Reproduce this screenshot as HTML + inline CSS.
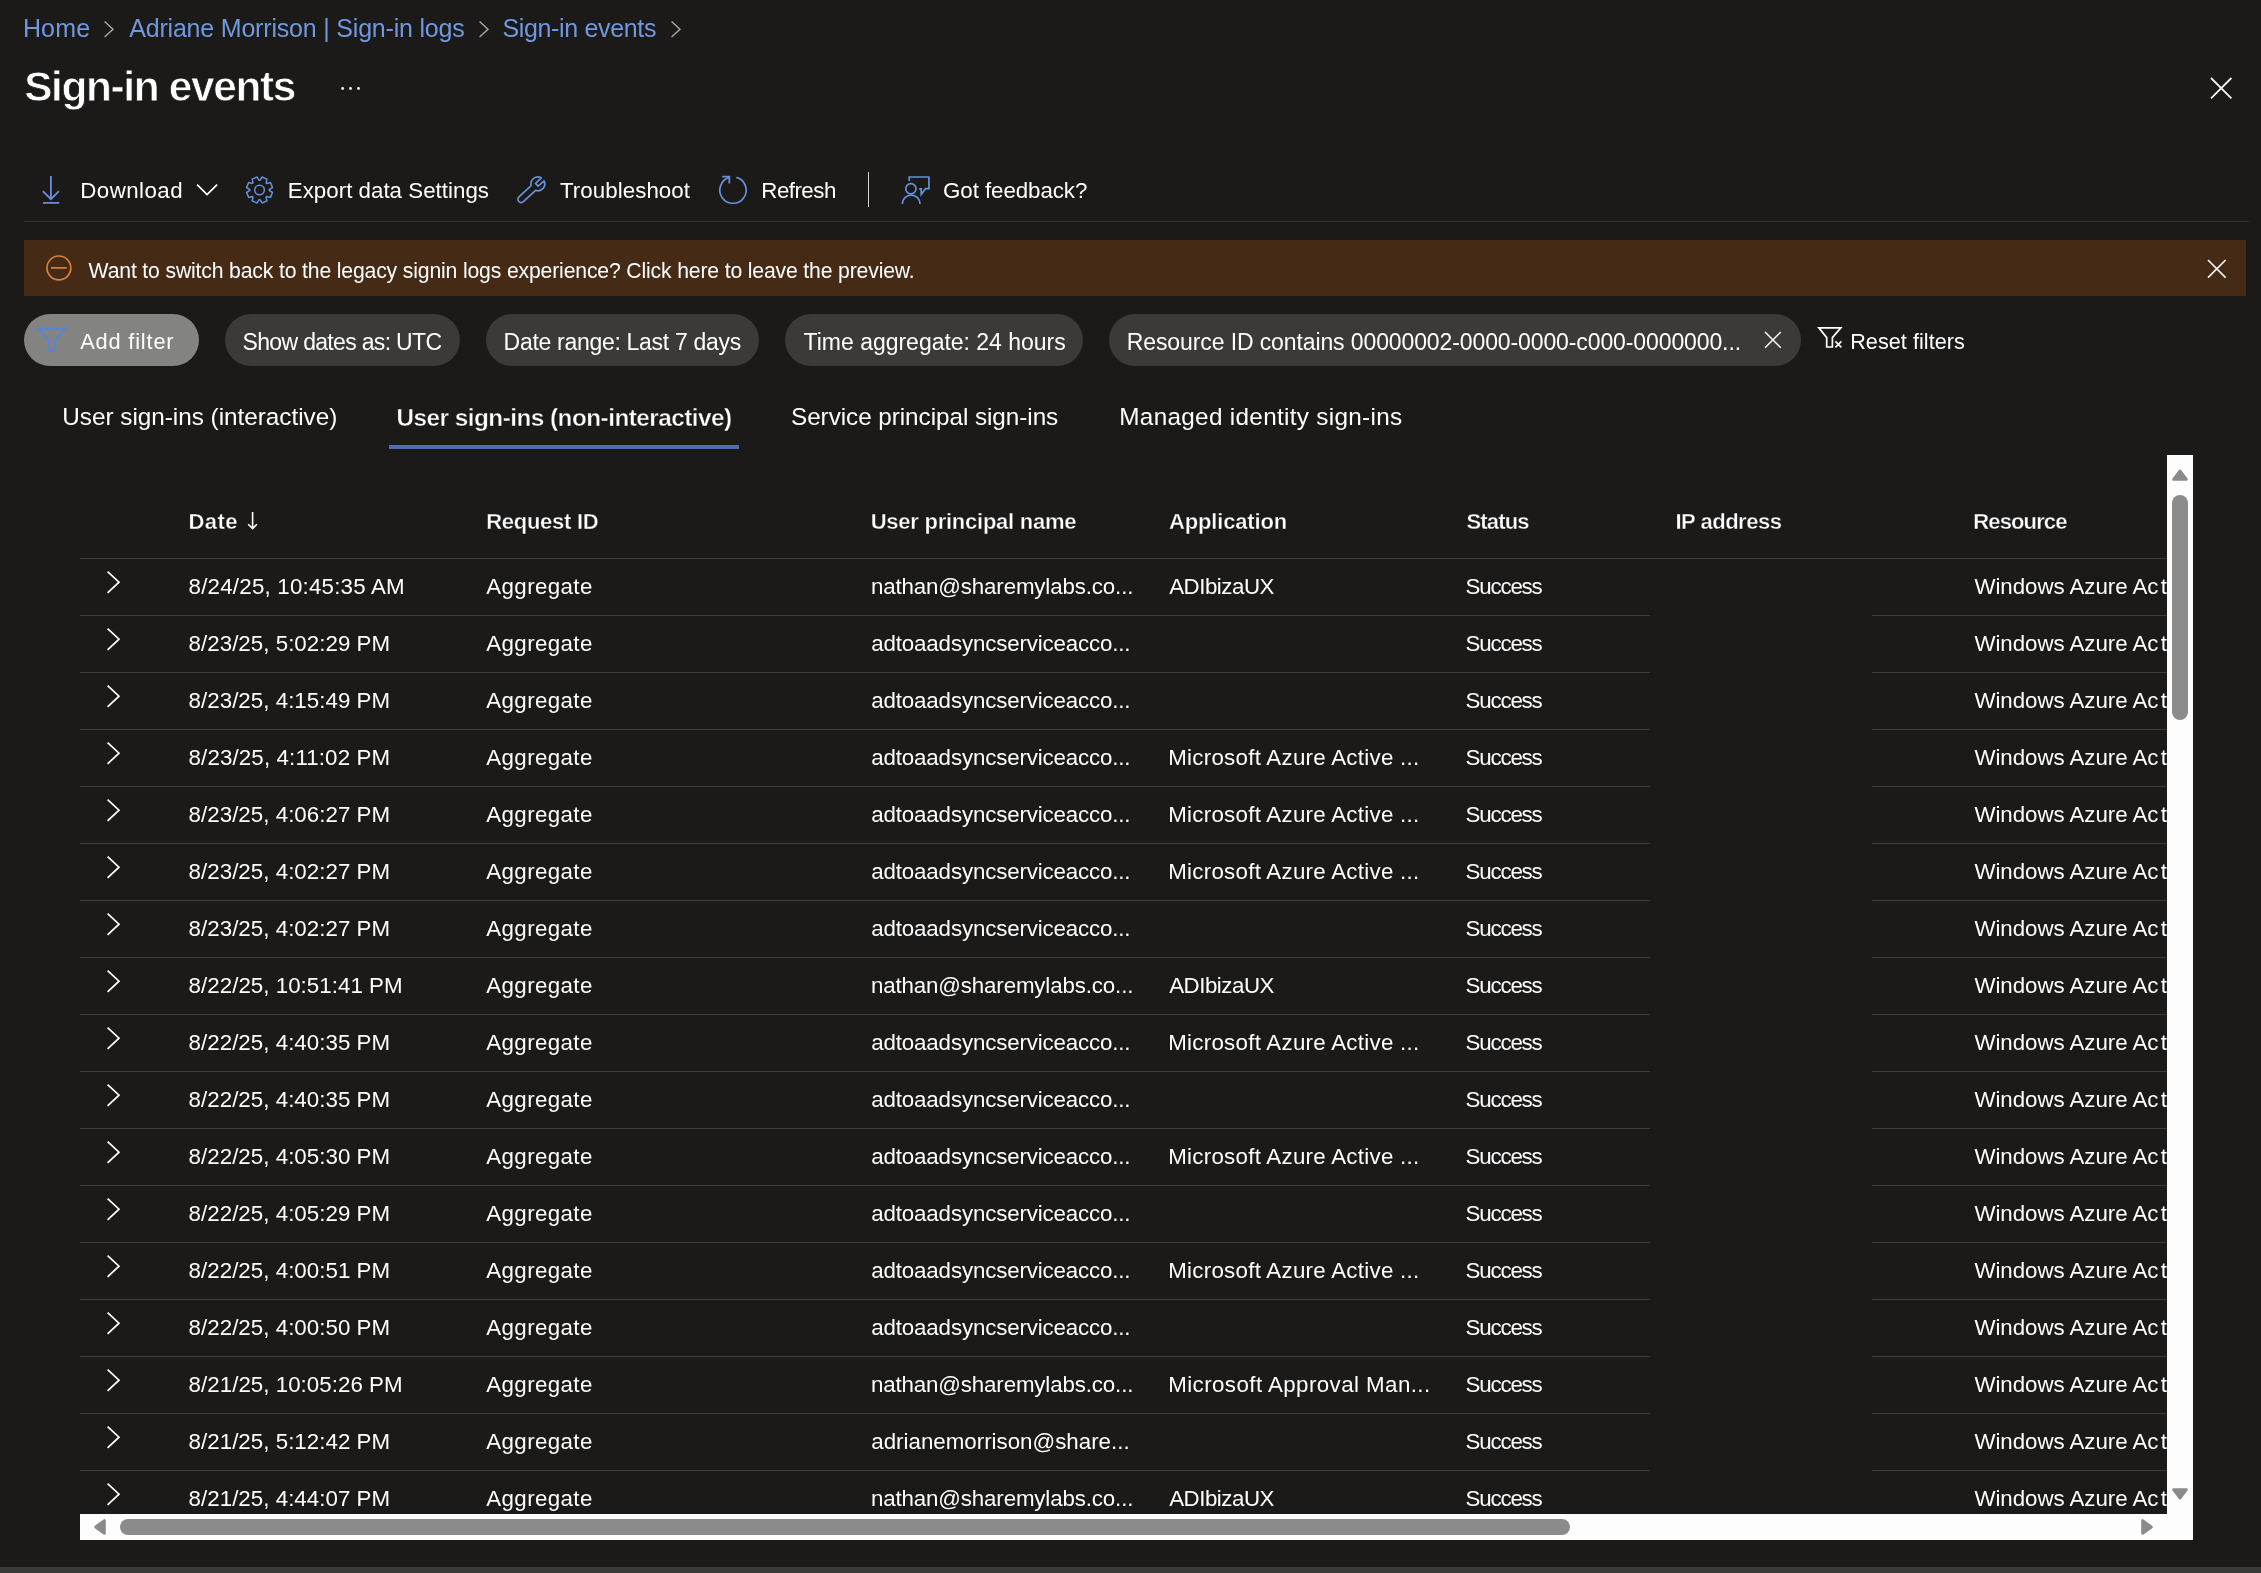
<!DOCTYPE html>
<html lang="en"><head><meta charset="utf-8"><title>Sign-in events</title>
<style>
*{box-sizing:border-box}
html,body{margin:0;padding:0}
body{width:2261px;height:1573px;overflow:hidden;background:#1b1a19;color:#fff;font-family:"Liberation Sans",sans-serif;position:relative}
.page{position:absolute;left:0;top:0;width:2261px;height:1573px;will-change:transform}
.t{position:absolute;margin:0;white-space:pre;color:#fff;font-weight:400;text-decoration:none}
.i{position:absolute;overflow:visible}
.sep{position:absolute;left:867.6px;top:172px;width:1.6px;height:35px;background:#d6d4d2}
.tbline{position:absolute;left:24px;top:221px;width:2225px;height:1px;background:#333231}
.banner{position:absolute;left:24px;top:240px;width:2222px;height:56px;background:#452b16}
.pill{position:absolute;top:314px;height:52px;border-radius:26px;background:#3b3a39}
.pill.add{background:#838382}
.tabline{position:absolute;left:389px;top:444.6px;width:350.2px;height:4.4px;background:#4f6cb4}
.grid{position:absolute;left:80px;top:455px;width:2087px;height:1059px;overflow:hidden}
.ghead{position:absolute;left:0;top:0;width:2087px;height:104px;border-bottom:1px solid #3d3c3a}
.row{position:absolute;left:0;width:2087px;height:57px}
.hl{position:absolute;bottom:0;height:1px;background:#3d3c3a}
.vtrack{position:absolute;left:2167px;top:455px;width:26px;height:1085px;background:#fdfdfd}
.htrack{position:absolute;left:80px;top:1514px;width:2113px;height:26px;background:#fdfdfd}
.thumb{position:absolute;background:#8b8b8b;border-radius:8px}
.foot{position:absolute;left:0;top:1567px;width:2261px;height:6px;background:#3a3a39}
</style></head>
<body>
<div class="page">
<nav class="crumbs">
<a class="t" style="left:22.90px;top:11.00px;font-size:25px;line-height:35px;letter-spacing:0.172px;color:#7098de">Home</a>
<svg class="i" style="left:101.80px;top:19.40px" width="13.6" height="20.6" viewBox="0 0 13.6 20.6"><path d="M2.6 2.6L11.0 10.3L2.6 18.0" stroke="#aaa9a7" stroke-width="1.4" fill="none"/></svg>
<a class="t" style="left:129.20px;top:11.00px;font-size:25px;line-height:35px;letter-spacing:-0.192px;color:#7098de">Adriane Morrison | Sign-in logs</a>
<svg class="i" style="left:476.60px;top:19.40px" width="13.6" height="20.6" viewBox="0 0 13.6 20.6"><path d="M2.6 2.6L11.0 10.3L2.6 18.0" stroke="#aaa9a7" stroke-width="1.4" fill="none"/></svg>
<a class="t" style="left:502.40px;top:11.00px;font-size:25px;line-height:35px;letter-spacing:-0.334px;color:#7098de">Sign-in events</a>
<svg class="i" style="left:669.20px;top:19.40px" width="13.6" height="20.6" viewBox="0 0 13.6 20.6"><path d="M2.6 2.6L11.0 10.3L2.6 18.0" stroke="#aaa9a7" stroke-width="1.4" fill="none"/></svg>
</nav>
<header class="title">
<h1 class="t" style="left:24.20px;top:57.10px;font-size:42.4px;line-height:59px;letter-spacing:-1.357px;font-weight:700;-webkit-text-stroke:0.8px #1b1a19">Sign-in events</h1>
<svg class="i" style="left:338.00px;top:84.00px" width="26" height="9" viewBox="0 0 26 9"><circle cx="4.65" cy="4.5" r="1.45" fill="#f0f0f0"/><circle cx="12.55" cy="4.5" r="1.45" fill="#f0f0f0"/><circle cx="20.5" cy="4.5" r="1.45" fill="#f0f0f0"/></svg>
<svg class="i" style="left:2209.40px;top:76.40px" width="24.4" height="24.4" viewBox="0 0 24.4 24.4"><path d="M2 2L22.4 22.4M22.4 2L2 22.4" stroke="#f3f2f1" stroke-width="1.8" fill="none"/></svg>
</header>
<div class="toolbar">
<div class="btn"><svg class="i" style="left:40.00px;top:173.00px" width="24" height="34" viewBox="0 0 24 34"><path d="M10.9 2.9V25.8M2.9 18.2L10.9 26.2L18.9 18.2M2.9 29.9H19.3" stroke="#6790d9" stroke-width="1.8" fill="none"/></svg><span class="t" style="left:80.30px;top:175.00px;font-size:22.3px;line-height:31px;letter-spacing:0.447px">Download</span><svg class="i" style="left:194.00px;top:181.00px" width="28" height="18" viewBox="0 0 28 18"><path d="M3.1 3.6L13.1 13.6L23.1 3.6" stroke="#fff" stroke-width="1.7" fill="none"/></svg></div>
<div class="btn"><svg class="i" style="left:243.00px;top:173.00px" width="34" height="34" viewBox="0 0 34 34"><path d="M19.05 4.04L23.95 6.07L23.10 9.85L23.70 10.45L27.48 9.60L29.51 14.50L26.24 16.58L26.24 17.42L29.51 19.50L27.48 24.40L23.70 23.55L23.10 24.15L23.95 27.93L19.05 29.96L16.97 26.69L16.13 26.69L14.05 29.96L9.15 27.93L10.00 24.15L9.40 23.55L5.62 24.40L3.59 19.50L6.86 17.42L6.86 16.58L3.59 14.50L5.62 9.60L9.40 10.45L10.00 9.85L9.15 6.07L14.05 4.04L16.13 7.31L16.97 7.31Z" stroke="#6790d9" stroke-width="1.5" fill="none" stroke-linejoin="round"/><circle cx="16.55" cy="17.0" r="4.8" stroke="#6790d9" stroke-width="1.5" fill="none"/></svg><span class="t" style="left:287.80px;top:175.00px;font-size:22.3px;line-height:31px;letter-spacing:0.019px">Export data Settings</span></div>
<div class="btn"><svg class="i" style="left:515.00px;top:173.00px" width="34" height="34" viewBox="0 0 34 34"><g transform="translate(22.84 10.86) rotate(137.3)"><path d="M-6.6 -2L1.35 -2L1.35 2L-6.6 2A6.9 6.9 0 0 0 6.06 3.3L22.67 3.3A3.3 3.3 0 0 0 22.67 -3.3L6.06 -3.3A6.9 6.9 0 0 0 -6.6 -2Z" stroke="#6790d9" stroke-width="1.7" fill="none" stroke-linejoin="round"/></g></svg><span class="t" style="left:560.00px;top:175.00px;font-size:22.3px;line-height:31px;letter-spacing:0.061px">Troubleshoot</span></div>
<div class="btn"><svg class="i" style="left:715.00px;top:172.00px" width="36" height="36" viewBox="0 0 36 36"><path d="M21.4 5.4A13.15 13.15 0 1 1 14.6 5.4" stroke="#6790d9" stroke-width="1.7" fill="none"/><path d="M7.2 4.6H14.3V11.4" stroke="#6790d9" stroke-width="1.8" fill="none"/></svg><span class="t" style="left:761.30px;top:175.00px;font-size:22.3px;line-height:31px;letter-spacing:-0.513px">Refresh</span></div>
<div class="sep"></div>
<div class="btn"><svg class="i" style="left:899.00px;top:173.00px" width="34" height="34" viewBox="0 0 34 34"><circle cx="11.89" cy="15.81" r="5.1" stroke="#6790d9" stroke-width="1.7" fill="none"/><path d="M3.36 30.9A8.84 8.84 0 0 1 21.04 30.9" stroke="#6790d9" stroke-width="1.7" fill="none"/><path d="M10.24 7.93V3.99H29.94V15.69H26.51L22.19 21.41V15.8H20.15" stroke="#6790d9" stroke-width="1.7" fill="none"/></svg><span class="t" style="left:943.10px;top:175.00px;font-size:22.3px;line-height:31px;letter-spacing:-0.069px">Got feedback?</span></div>
</div>
<div class="tbline"></div>
<div class="banner"><svg class="i" style="left:20.00px;top:13.00px" width="30" height="30" viewBox="0 0 30 30"><circle cx="14.9" cy="14.9" r="11.9" stroke="#d9813f" stroke-width="1.7" fill="none"/><path d="M7 14.9H22.8" stroke="#d9813f" stroke-width="1.7" fill="none"/></svg><span class="t" style="left:64.60px;top:15.90px;font-size:21.2px;line-height:30px;letter-spacing:-0.157px">Want to switch back to the legacy signin logs experience? Click here to leave the preview.</span><svg class="i" style="left:2182.20px;top:18.30px" width="21.6" height="21.6" viewBox="0 0 21.6 21.6"><path d="M2 2L19.6 19.6M19.6 2L2 19.6" stroke="#f3f2f1" stroke-width="1.7" fill="none"/></svg></div>
<div class="filters">
<div class="pill add" style="left:23.8px;width:175.4px"><svg class="i" style="left:11.20px;top:11.00px" width="34" height="30" viewBox="0 0 34 30"><path d="M3.1 3.8H30.5L20.1 15.4V25.9H14.2V15.4Z" stroke="#5a83d6" stroke-width="2" fill="none"/></svg><span class="t" style="left:56.40px;top:11.90px;font-size:21.8px;line-height:31px;letter-spacing:0.825px">Add filter</span></div>
<div class="pill" style="left:224.8px;width:235px"><span class="t" style="left:17.80px;top:12.00px;font-size:23px;line-height:32px;letter-spacing:-0.677px">Show dates as: UTC</span></div>
<div class="pill" style="left:485.8px;width:273.2px"><span class="t" style="left:17.80px;top:12.00px;font-size:23px;line-height:32px;letter-spacing:-0.296px">Date range: Last 7 days</span></div>
<div class="pill" style="left:784.8px;width:298.2px"><span class="t" style="left:18.80px;top:12.00px;font-size:23px;line-height:32px;letter-spacing:-0.019px">Time aggregate: 24 hours</span></div>
<div class="pill" style="left:1109px;width:691.7px"><span class="t" style="left:17.80px;top:12.00px;font-size:23px;line-height:32px;letter-spacing:-0.109px">Resource ID contains 00000002-0000-0000-c000-0000000...</span><svg class="i" style="left:653.90px;top:15.90px" width="19.8" height="19.8" viewBox="0 0 19.8 19.8"><path d="M2 2L17.8 17.8M17.8 2L2 17.8" stroke="#f3f2f1" stroke-width="1.6" fill="none"/></svg></div>
<div class="reset"><svg class="i" style="left:1816.00px;top:325.00px" width="30" height="26" viewBox="0 0 30 26"><path d="M2.9 2.9H24.8L16.4 12.6V22H10.7V12.6Z" stroke="#fff" stroke-width="1.7" fill="none"/><path d="M19.4 16.4L25.4 22.4M25.4 16.4L19.4 22.4" stroke="#fff" stroke-width="1.6" fill="none"/></svg><span class="t" style="left:1850.20px;top:327.00px;font-size:21.6px;line-height:30px;letter-spacing:0.050px">Reset filters</span></div>
</div>
<div class="tabs"><span class="t" style="left:62.30px;top:399.80px;font-size:24.3px;line-height:34px;letter-spacing:-0.018px">User sign-ins (interactive)</span><span class="t" style="left:396.50px;top:400.60px;font-size:24.3px;line-height:34px;letter-spacing:-0.511px;font-weight:700;-webkit-text-stroke:0.4px #1b1a19">User sign-ins (non-interactive)</span><span class="t" style="left:791.00px;top:399.80px;font-size:24.3px;line-height:34px;letter-spacing:-0.059px">Service principal sign-ins</span><span class="t" style="left:1119.30px;top:399.80px;font-size:24.3px;line-height:34px;letter-spacing:0.305px">Managed identity sign-ins</span><div class="tabline"></div></div>
<div class="grid">
<div class="ghead"><span class="t" style="left:108.52px;top:51.00px;font-size:22.0px;line-height:31px;letter-spacing:0.466px;font-weight:700;-webkit-text-stroke:0.35px #1b1a19">Date</span><svg class="i" style="left:165.00px;top:54.00px" width="16" height="24" viewBox="0 0 16 24"><path d="M7.6 3V19.4M3.2 15.2L7.6 19.6L12 15.2" stroke="#fff" stroke-width="1.6" fill="none"/></svg><span class="t" style="left:406.22px;top:51.00px;font-size:22.0px;line-height:31px;letter-spacing:-0.276px;font-weight:700;-webkit-text-stroke:0.35px #1b1a19">Request ID</span><span class="t" style="left:790.73px;top:51.00px;font-size:22.0px;line-height:31px;letter-spacing:-0.252px;font-weight:700;-webkit-text-stroke:0.35px #1b1a19">User principal name</span><span class="t" style="left:1089.03px;top:51.00px;font-size:22.0px;line-height:31px;letter-spacing:-0.159px;font-weight:700;-webkit-text-stroke:0.35px #1b1a19">Application</span><span class="t" style="left:1386.53px;top:51.00px;font-size:22.0px;line-height:31px;letter-spacing:-0.833px;font-weight:700;-webkit-text-stroke:0.35px #1b1a19">Status</span><span class="t" style="left:1595.42px;top:51.00px;font-size:22.0px;line-height:31px;letter-spacing:-0.489px;font-weight:700;-webkit-text-stroke:0.35px #1b1a19">IP address</span><span class="t" style="left:1893.33px;top:51.00px;font-size:22.0px;line-height:31px;letter-spacing:-0.885px;font-weight:700;-webkit-text-stroke:0.35px #1b1a19">Resource</span></div>
<div class="row" style="top:104px"><svg class="i" style="left:24.80px;top:10.40px" width="16.6" height="26.4" viewBox="0 0 16.6 26.4"><path d="M2.6 2.6L14.0 13.2L2.6 23.799999999999997" stroke="#fff" stroke-width="1.7" fill="none"/></svg><span class="t" style="left:108.60px;top:12.00px;font-size:22.3px;line-height:31px;letter-spacing:0.215px">8/24/25, 10:45:35 AM</span><span class="t" style="left:406.30px;top:12.00px;font-size:22.3px;line-height:31px;letter-spacing:0.387px">Aggregate</span><span class="t" style="left:790.90px;top:12.00px;font-size:22.3px;line-height:31px;letter-spacing:-0.133px">nathan@sharemylabs.co...</span><span class="t" style="left:1089.20px;top:12.00px;font-size:22.3px;line-height:31px;letter-spacing:-0.472px">ADIbizaUX</span><span class="t" style="left:1385.60px;top:12.00px;font-size:22.3px;line-height:31px;letter-spacing:-1.189px">Success</span><span class="t" style="left:1894.40px;top:12.00px;font-size:22.3px;line-height:31px;letter-spacing:-0.041px">Windows Azure Ac<span style="margin-left:2.4px">tive Directory</span></span><div class="hl" style="left:0;width:1570px"></div><div class="hl" style="left:1792px;width:295px"></div></div>
<div class="row" style="top:161px"><svg class="i" style="left:24.80px;top:10.40px" width="16.6" height="26.4" viewBox="0 0 16.6 26.4"><path d="M2.6 2.6L14.0 13.2L2.6 23.799999999999997" stroke="#fff" stroke-width="1.7" fill="none"/></svg><span class="t" style="left:108.60px;top:12.00px;font-size:22.3px;line-height:31px;letter-spacing:0.036px">8/23/25, 5:02:29 PM</span><span class="t" style="left:406.30px;top:12.00px;font-size:22.3px;line-height:31px;letter-spacing:0.387px">Aggregate</span><span class="t" style="left:791.30px;top:12.00px;font-size:22.3px;line-height:31px;letter-spacing:-0.145px">adtoaadsyncserviceacco...</span><span class="t" style="left:1385.60px;top:12.00px;font-size:22.3px;line-height:31px;letter-spacing:-1.189px">Success</span><span class="t" style="left:1894.40px;top:12.00px;font-size:22.3px;line-height:31px;letter-spacing:-0.041px">Windows Azure Ac<span style="margin-left:2.4px">tive Directory</span></span><div class="hl" style="left:0;width:1570px"></div><div class="hl" style="left:1792px;width:295px"></div></div>
<div class="row" style="top:218px"><svg class="i" style="left:24.80px;top:10.40px" width="16.6" height="26.4" viewBox="0 0 16.6 26.4"><path d="M2.6 2.6L14.0 13.2L2.6 23.799999999999997" stroke="#fff" stroke-width="1.7" fill="none"/></svg><span class="t" style="left:108.60px;top:12.00px;font-size:22.3px;line-height:31px;letter-spacing:0.036px">8/23/25, 4:15:49 PM</span><span class="t" style="left:406.30px;top:12.00px;font-size:22.3px;line-height:31px;letter-spacing:0.387px">Aggregate</span><span class="t" style="left:791.30px;top:12.00px;font-size:22.3px;line-height:31px;letter-spacing:-0.145px">adtoaadsyncserviceacco...</span><span class="t" style="left:1385.60px;top:12.00px;font-size:22.3px;line-height:31px;letter-spacing:-1.189px">Success</span><span class="t" style="left:1894.40px;top:12.00px;font-size:22.3px;line-height:31px;letter-spacing:-0.041px">Windows Azure Ac<span style="margin-left:2.4px">tive Directory</span></span><div class="hl" style="left:0;width:1570px"></div><div class="hl" style="left:1792px;width:295px"></div></div>
<div class="row" style="top:275px"><svg class="i" style="left:24.80px;top:10.40px" width="16.6" height="26.4" viewBox="0 0 16.6 26.4"><path d="M2.6 2.6L14.0 13.2L2.6 23.799999999999997" stroke="#fff" stroke-width="1.7" fill="none"/></svg><span class="t" style="left:108.60px;top:12.00px;font-size:22.3px;line-height:31px;letter-spacing:0.128px">8/23/25, 4:11:02 PM</span><span class="t" style="left:406.30px;top:12.00px;font-size:22.3px;line-height:31px;letter-spacing:0.387px">Aggregate</span><span class="t" style="left:791.30px;top:12.00px;font-size:22.3px;line-height:31px;letter-spacing:-0.145px">adtoaadsyncserviceacco...</span><span class="t" style="left:1088.20px;top:12.00px;font-size:22.3px;line-height:31px;letter-spacing:0.275px">Microsoft Azure Active ...</span><span class="t" style="left:1385.60px;top:12.00px;font-size:22.3px;line-height:31px;letter-spacing:-1.189px">Success</span><span class="t" style="left:1894.40px;top:12.00px;font-size:22.3px;line-height:31px;letter-spacing:-0.041px">Windows Azure Ac<span style="margin-left:2.4px">tive Directory</span></span><div class="hl" style="left:0;width:1570px"></div><div class="hl" style="left:1792px;width:295px"></div></div>
<div class="row" style="top:332px"><svg class="i" style="left:24.80px;top:10.40px" width="16.6" height="26.4" viewBox="0 0 16.6 26.4"><path d="M2.6 2.6L14.0 13.2L2.6 23.799999999999997" stroke="#fff" stroke-width="1.7" fill="none"/></svg><span class="t" style="left:108.60px;top:12.00px;font-size:22.3px;line-height:31px;letter-spacing:0.036px">8/23/25, 4:06:27 PM</span><span class="t" style="left:406.30px;top:12.00px;font-size:22.3px;line-height:31px;letter-spacing:0.387px">Aggregate</span><span class="t" style="left:791.30px;top:12.00px;font-size:22.3px;line-height:31px;letter-spacing:-0.145px">adtoaadsyncserviceacco...</span><span class="t" style="left:1088.20px;top:12.00px;font-size:22.3px;line-height:31px;letter-spacing:0.275px">Microsoft Azure Active ...</span><span class="t" style="left:1385.60px;top:12.00px;font-size:22.3px;line-height:31px;letter-spacing:-1.189px">Success</span><span class="t" style="left:1894.40px;top:12.00px;font-size:22.3px;line-height:31px;letter-spacing:-0.041px">Windows Azure Ac<span style="margin-left:2.4px">tive Directory</span></span><div class="hl" style="left:0;width:1570px"></div><div class="hl" style="left:1792px;width:295px"></div></div>
<div class="row" style="top:389px"><svg class="i" style="left:24.80px;top:10.40px" width="16.6" height="26.4" viewBox="0 0 16.6 26.4"><path d="M2.6 2.6L14.0 13.2L2.6 23.799999999999997" stroke="#fff" stroke-width="1.7" fill="none"/></svg><span class="t" style="left:108.60px;top:12.00px;font-size:22.3px;line-height:31px;letter-spacing:0.036px">8/23/25, 4:02:27 PM</span><span class="t" style="left:406.30px;top:12.00px;font-size:22.3px;line-height:31px;letter-spacing:0.387px">Aggregate</span><span class="t" style="left:791.30px;top:12.00px;font-size:22.3px;line-height:31px;letter-spacing:-0.145px">adtoaadsyncserviceacco...</span><span class="t" style="left:1088.20px;top:12.00px;font-size:22.3px;line-height:31px;letter-spacing:0.275px">Microsoft Azure Active ...</span><span class="t" style="left:1385.60px;top:12.00px;font-size:22.3px;line-height:31px;letter-spacing:-1.189px">Success</span><span class="t" style="left:1894.40px;top:12.00px;font-size:22.3px;line-height:31px;letter-spacing:-0.041px">Windows Azure Ac<span style="margin-left:2.4px">tive Directory</span></span><div class="hl" style="left:0;width:1570px"></div><div class="hl" style="left:1792px;width:295px"></div></div>
<div class="row" style="top:446px"><svg class="i" style="left:24.80px;top:10.40px" width="16.6" height="26.4" viewBox="0 0 16.6 26.4"><path d="M2.6 2.6L14.0 13.2L2.6 23.799999999999997" stroke="#fff" stroke-width="1.7" fill="none"/></svg><span class="t" style="left:108.60px;top:12.00px;font-size:22.3px;line-height:31px;letter-spacing:0.036px">8/23/25, 4:02:27 PM</span><span class="t" style="left:406.30px;top:12.00px;font-size:22.3px;line-height:31px;letter-spacing:0.387px">Aggregate</span><span class="t" style="left:791.30px;top:12.00px;font-size:22.3px;line-height:31px;letter-spacing:-0.145px">adtoaadsyncserviceacco...</span><span class="t" style="left:1385.60px;top:12.00px;font-size:22.3px;line-height:31px;letter-spacing:-1.189px">Success</span><span class="t" style="left:1894.40px;top:12.00px;font-size:22.3px;line-height:31px;letter-spacing:-0.041px">Windows Azure Ac<span style="margin-left:2.4px">tive Directory</span></span><div class="hl" style="left:0;width:1570px"></div><div class="hl" style="left:1792px;width:295px"></div></div>
<div class="row" style="top:503px"><svg class="i" style="left:24.80px;top:10.40px" width="16.6" height="26.4" viewBox="0 0 16.6 26.4"><path d="M2.6 2.6L14.0 13.2L2.6 23.799999999999997" stroke="#fff" stroke-width="1.7" fill="none"/></svg><span class="t" style="left:108.60px;top:12.00px;font-size:22.3px;line-height:31px;letter-spacing:0.040px">8/22/25, 10:51:41 PM</span><span class="t" style="left:406.30px;top:12.00px;font-size:22.3px;line-height:31px;letter-spacing:0.387px">Aggregate</span><span class="t" style="left:790.90px;top:12.00px;font-size:22.3px;line-height:31px;letter-spacing:-0.133px">nathan@sharemylabs.co...</span><span class="t" style="left:1089.20px;top:12.00px;font-size:22.3px;line-height:31px;letter-spacing:-0.472px">ADIbizaUX</span><span class="t" style="left:1385.60px;top:12.00px;font-size:22.3px;line-height:31px;letter-spacing:-1.189px">Success</span><span class="t" style="left:1894.40px;top:12.00px;font-size:22.3px;line-height:31px;letter-spacing:-0.041px">Windows Azure Ac<span style="margin-left:2.4px">tive Directory</span></span><div class="hl" style="left:0;width:1570px"></div><div class="hl" style="left:1792px;width:295px"></div></div>
<div class="row" style="top:560px"><svg class="i" style="left:24.80px;top:10.40px" width="16.6" height="26.4" viewBox="0 0 16.6 26.4"><path d="M2.6 2.6L14.0 13.2L2.6 23.799999999999997" stroke="#fff" stroke-width="1.7" fill="none"/></svg><span class="t" style="left:108.60px;top:12.00px;font-size:22.3px;line-height:31px;letter-spacing:0.036px">8/22/25, 4:40:35 PM</span><span class="t" style="left:406.30px;top:12.00px;font-size:22.3px;line-height:31px;letter-spacing:0.387px">Aggregate</span><span class="t" style="left:791.30px;top:12.00px;font-size:22.3px;line-height:31px;letter-spacing:-0.145px">adtoaadsyncserviceacco...</span><span class="t" style="left:1088.20px;top:12.00px;font-size:22.3px;line-height:31px;letter-spacing:0.275px">Microsoft Azure Active ...</span><span class="t" style="left:1385.60px;top:12.00px;font-size:22.3px;line-height:31px;letter-spacing:-1.189px">Success</span><span class="t" style="left:1894.40px;top:12.00px;font-size:22.3px;line-height:31px;letter-spacing:-0.041px">Windows Azure Ac<span style="margin-left:2.4px">tive Directory</span></span><div class="hl" style="left:0;width:1570px"></div><div class="hl" style="left:1792px;width:295px"></div></div>
<div class="row" style="top:617px"><svg class="i" style="left:24.80px;top:10.40px" width="16.6" height="26.4" viewBox="0 0 16.6 26.4"><path d="M2.6 2.6L14.0 13.2L2.6 23.799999999999997" stroke="#fff" stroke-width="1.7" fill="none"/></svg><span class="t" style="left:108.60px;top:12.00px;font-size:22.3px;line-height:31px;letter-spacing:0.036px">8/22/25, 4:40:35 PM</span><span class="t" style="left:406.30px;top:12.00px;font-size:22.3px;line-height:31px;letter-spacing:0.387px">Aggregate</span><span class="t" style="left:791.30px;top:12.00px;font-size:22.3px;line-height:31px;letter-spacing:-0.145px">adtoaadsyncserviceacco...</span><span class="t" style="left:1385.60px;top:12.00px;font-size:22.3px;line-height:31px;letter-spacing:-1.189px">Success</span><span class="t" style="left:1894.40px;top:12.00px;font-size:22.3px;line-height:31px;letter-spacing:-0.041px">Windows Azure Ac<span style="margin-left:2.4px">tive Directory</span></span><div class="hl" style="left:0;width:1570px"></div><div class="hl" style="left:1792px;width:295px"></div></div>
<div class="row" style="top:674px"><svg class="i" style="left:24.80px;top:10.40px" width="16.6" height="26.4" viewBox="0 0 16.6 26.4"><path d="M2.6 2.6L14.0 13.2L2.6 23.799999999999997" stroke="#fff" stroke-width="1.7" fill="none"/></svg><span class="t" style="left:108.60px;top:12.00px;font-size:22.3px;line-height:31px;letter-spacing:0.036px">8/22/25, 4:05:30 PM</span><span class="t" style="left:406.30px;top:12.00px;font-size:22.3px;line-height:31px;letter-spacing:0.387px">Aggregate</span><span class="t" style="left:791.30px;top:12.00px;font-size:22.3px;line-height:31px;letter-spacing:-0.145px">adtoaadsyncserviceacco...</span><span class="t" style="left:1088.20px;top:12.00px;font-size:22.3px;line-height:31px;letter-spacing:0.275px">Microsoft Azure Active ...</span><span class="t" style="left:1385.60px;top:12.00px;font-size:22.3px;line-height:31px;letter-spacing:-1.189px">Success</span><span class="t" style="left:1894.40px;top:12.00px;font-size:22.3px;line-height:31px;letter-spacing:-0.041px">Windows Azure Ac<span style="margin-left:2.4px">tive Directory</span></span><div class="hl" style="left:0;width:1570px"></div><div class="hl" style="left:1792px;width:295px"></div></div>
<div class="row" style="top:731px"><svg class="i" style="left:24.80px;top:10.40px" width="16.6" height="26.4" viewBox="0 0 16.6 26.4"><path d="M2.6 2.6L14.0 13.2L2.6 23.799999999999997" stroke="#fff" stroke-width="1.7" fill="none"/></svg><span class="t" style="left:108.60px;top:12.00px;font-size:22.3px;line-height:31px;letter-spacing:0.036px">8/22/25, 4:05:29 PM</span><span class="t" style="left:406.30px;top:12.00px;font-size:22.3px;line-height:31px;letter-spacing:0.387px">Aggregate</span><span class="t" style="left:791.30px;top:12.00px;font-size:22.3px;line-height:31px;letter-spacing:-0.145px">adtoaadsyncserviceacco...</span><span class="t" style="left:1385.60px;top:12.00px;font-size:22.3px;line-height:31px;letter-spacing:-1.189px">Success</span><span class="t" style="left:1894.40px;top:12.00px;font-size:22.3px;line-height:31px;letter-spacing:-0.041px">Windows Azure Ac<span style="margin-left:2.4px">tive Directory</span></span><div class="hl" style="left:0;width:1570px"></div><div class="hl" style="left:1792px;width:295px"></div></div>
<div class="row" style="top:788px"><svg class="i" style="left:24.80px;top:10.40px" width="16.6" height="26.4" viewBox="0 0 16.6 26.4"><path d="M2.6 2.6L14.0 13.2L2.6 23.799999999999997" stroke="#fff" stroke-width="1.7" fill="none"/></svg><span class="t" style="left:108.60px;top:12.00px;font-size:22.3px;line-height:31px;letter-spacing:0.036px">8/22/25, 4:00:51 PM</span><span class="t" style="left:406.30px;top:12.00px;font-size:22.3px;line-height:31px;letter-spacing:0.387px">Aggregate</span><span class="t" style="left:791.30px;top:12.00px;font-size:22.3px;line-height:31px;letter-spacing:-0.145px">adtoaadsyncserviceacco...</span><span class="t" style="left:1088.20px;top:12.00px;font-size:22.3px;line-height:31px;letter-spacing:0.275px">Microsoft Azure Active ...</span><span class="t" style="left:1385.60px;top:12.00px;font-size:22.3px;line-height:31px;letter-spacing:-1.189px">Success</span><span class="t" style="left:1894.40px;top:12.00px;font-size:22.3px;line-height:31px;letter-spacing:-0.041px">Windows Azure Ac<span style="margin-left:2.4px">tive Directory</span></span><div class="hl" style="left:0;width:1570px"></div><div class="hl" style="left:1792px;width:295px"></div></div>
<div class="row" style="top:845px"><svg class="i" style="left:24.80px;top:10.40px" width="16.6" height="26.4" viewBox="0 0 16.6 26.4"><path d="M2.6 2.6L14.0 13.2L2.6 23.799999999999997" stroke="#fff" stroke-width="1.7" fill="none"/></svg><span class="t" style="left:108.60px;top:12.00px;font-size:22.3px;line-height:31px;letter-spacing:0.036px">8/22/25, 4:00:50 PM</span><span class="t" style="left:406.30px;top:12.00px;font-size:22.3px;line-height:31px;letter-spacing:0.387px">Aggregate</span><span class="t" style="left:791.30px;top:12.00px;font-size:22.3px;line-height:31px;letter-spacing:-0.145px">adtoaadsyncserviceacco...</span><span class="t" style="left:1385.60px;top:12.00px;font-size:22.3px;line-height:31px;letter-spacing:-1.189px">Success</span><span class="t" style="left:1894.40px;top:12.00px;font-size:22.3px;line-height:31px;letter-spacing:-0.041px">Windows Azure Ac<span style="margin-left:2.4px">tive Directory</span></span><div class="hl" style="left:0;width:1570px"></div><div class="hl" style="left:1792px;width:295px"></div></div>
<div class="row" style="top:902px"><svg class="i" style="left:24.80px;top:10.40px" width="16.6" height="26.4" viewBox="0 0 16.6 26.4"><path d="M2.6 2.6L14.0 13.2L2.6 23.799999999999997" stroke="#fff" stroke-width="1.7" fill="none"/></svg><span class="t" style="left:108.60px;top:12.00px;font-size:22.3px;line-height:31px;letter-spacing:0.040px">8/21/25, 10:05:26 PM</span><span class="t" style="left:406.30px;top:12.00px;font-size:22.3px;line-height:31px;letter-spacing:0.387px">Aggregate</span><span class="t" style="left:790.90px;top:12.00px;font-size:22.3px;line-height:31px;letter-spacing:-0.133px">nathan@sharemylabs.co...</span><span class="t" style="left:1088.20px;top:12.00px;font-size:22.3px;line-height:31px;letter-spacing:0.435px">Microsoft Approval Man...</span><span class="t" style="left:1385.60px;top:12.00px;font-size:22.3px;line-height:31px;letter-spacing:-1.189px">Success</span><span class="t" style="left:1894.40px;top:12.00px;font-size:22.3px;line-height:31px;letter-spacing:-0.041px">Windows Azure Ac<span style="margin-left:2.4px">tive Directory</span></span><div class="hl" style="left:0;width:1570px"></div><div class="hl" style="left:1792px;width:295px"></div></div>
<div class="row" style="top:959px"><svg class="i" style="left:24.80px;top:10.40px" width="16.6" height="26.4" viewBox="0 0 16.6 26.4"><path d="M2.6 2.6L14.0 13.2L2.6 23.799999999999997" stroke="#fff" stroke-width="1.7" fill="none"/></svg><span class="t" style="left:108.60px;top:12.00px;font-size:22.3px;line-height:31px;letter-spacing:0.036px">8/21/25, 5:12:42 PM</span><span class="t" style="left:406.30px;top:12.00px;font-size:22.3px;line-height:31px;letter-spacing:0.387px">Aggregate</span><span class="t" style="left:791.30px;top:12.00px;font-size:22.3px;line-height:31px;letter-spacing:0.008px">adrianemorrison@share...</span><span class="t" style="left:1385.60px;top:12.00px;font-size:22.3px;line-height:31px;letter-spacing:-1.189px">Success</span><span class="t" style="left:1894.40px;top:12.00px;font-size:22.3px;line-height:31px;letter-spacing:-0.041px">Windows Azure Ac<span style="margin-left:2.4px">tive Directory</span></span><div class="hl" style="left:0;width:1570px"></div><div class="hl" style="left:1792px;width:295px"></div></div>
<div class="row" style="top:1016px"><svg class="i" style="left:24.80px;top:10.40px" width="16.6" height="26.4" viewBox="0 0 16.6 26.4"><path d="M2.6 2.6L14.0 13.2L2.6 23.799999999999997" stroke="#fff" stroke-width="1.7" fill="none"/></svg><span class="t" style="left:108.60px;top:12.00px;font-size:22.3px;line-height:31px;letter-spacing:0.036px">8/21/25, 4:44:07 PM</span><span class="t" style="left:406.30px;top:12.00px;font-size:22.3px;line-height:31px;letter-spacing:0.387px">Aggregate</span><span class="t" style="left:790.90px;top:12.00px;font-size:22.3px;line-height:31px;letter-spacing:-0.133px">nathan@sharemylabs.co...</span><span class="t" style="left:1089.20px;top:12.00px;font-size:22.3px;line-height:31px;letter-spacing:-0.472px">ADIbizaUX</span><span class="t" style="left:1385.60px;top:12.00px;font-size:22.3px;line-height:31px;letter-spacing:-1.189px">Success</span><span class="t" style="left:1894.40px;top:12.00px;font-size:22.3px;line-height:31px;letter-spacing:-0.041px">Windows Azure Ac<span style="margin-left:2.4px">tive Directory</span></span><div class="hl" style="left:0;width:1570px"></div><div class="hl" style="left:1792px;width:295px"></div></div>
</div>
<div class="vtrack"><svg class="i" style="left:5.00px;top:12.90px" width="16" height="14" viewBox="0 0 16 14"><path d="M8 2.9L14.4 11.4H1.6Z" fill="#8b8b8b" stroke="#8b8b8b" stroke-width="2.8" stroke-linejoin="round"/></svg><div class="thumb" style="left:5px;top:40px;width:16px;height:225px"></div><svg class="i" style="left:5.00px;top:1031.90px" width="16" height="14" viewBox="0 0 16 14"><path d="M1.6 2.6H14.4L8 11.1Z" fill="#8b8b8b" stroke="#8b8b8b" stroke-width="2.8" stroke-linejoin="round"/></svg></div>
<div class="htrack"><svg class="i" style="left:13.20px;top:5.20px" width="14" height="16" viewBox="0 0 14 16"><path d="M2.6 8L11.4 1.6V14.4Z" fill="#8b8b8b" stroke="#8b8b8b" stroke-width="2.8" stroke-linejoin="round"/></svg><div class="thumb" style="left:40px;top:5.2px;width:1450px;height:15.8px"></div><svg class="i" style="left:2059.80px;top:5.20px" width="14" height="16" viewBox="0 0 14 16"><path d="M11.4 8L2.6 1.6V14.4Z" fill="#8b8b8b" stroke="#8b8b8b" stroke-width="2.8" stroke-linejoin="round"/></svg></div>
<div class="foot"></div>
</div>
</body></html>
